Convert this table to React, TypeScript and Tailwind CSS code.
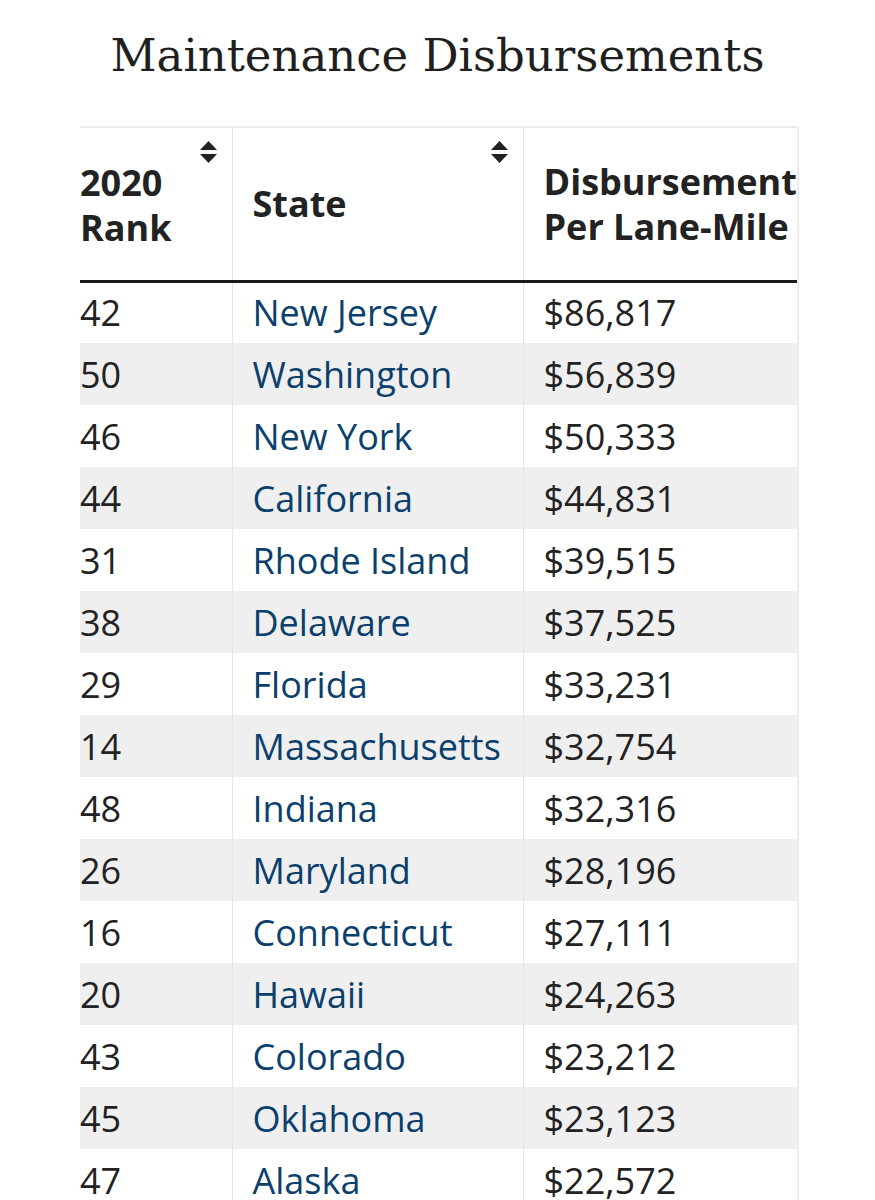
const rows: [string, string, string][] = [
  ["42", "New Jersey", "$86,817"],
  ["50", "Washington", "$56,839"],
  ["46", "New York", "$50,333"],
  ["44", "California", "$44,831"],
  ["31", "Rhode Island", "$39,515"],
  ["38", "Delaware", "$37,525"],
  ["29", "Florida", "$33,231"],
  ["14", "Massachusetts", "$32,754"],
  ["48", "Indiana", "$32,316"],
  ["26", "Maryland", "$28,196"],
  ["16", "Connecticut", "$27,111"],
  ["20", "Hawaii", "$24,263"],
  ["43", "Colorado", "$23,212"],
  ["45", "Oklahoma", "$23,123"],
  ["47", "Alaska", "$22,572"],
]

function SortIcon() {
  return (
    <svg width="17" height="22" viewBox="0 0 17 22" className="absolute top-[13px] right-[15px]">
      <path d="M8.5 0 L17 9 H0 Z" fill="#222" />
      <path d="M0 13 H17 L8.5 22 Z" fill="#222" />
    </svg>
  )
}

export default function App() {
  return (
    <div className="h-[1200px] bg-white overflow-hidden" style={{ fontFamily: '"Open Sans", sans-serif' }}>
      <h1
        className="text-center text-[45px] leading-none pt-[33px] pb-[48px] text-[#1f1f1f]"
        style={{ fontFamily: '"DejaVu Serif", serif' }}
      >
        Maintenance Disbursements
      </h1>

      <div className="ml-[80px] w-[719px] overflow-hidden border-t-2 border-r-2 border-[#ececec]">
        <table className="table-fixed border-collapse w-[760px] text-[36px] text-[#222]">
          <colgroup>
            <col className="w-[152px]" />
            <col className="w-[291px]" />
            <col className="w-[317px]" />
          </colgroup>
          <thead>
            <tr className="border-b-[3px] border-[#1a1a1a]">
              <th className="relative h-[153px] text-left align-middle font-bold leading-[45px] pl-0 pt-[3px] border-r border-[#e6e6e6]">
                <SortIcon />
                2020
                <br />
                Rank
              </th>
              <th className="relative text-left align-middle font-bold leading-[45px] pl-[20px] border-r border-[#e6e6e6]">
                <SortIcon />
                State
              </th>
              <th className="text-left align-middle font-bold leading-[45px] pl-[20px] whitespace-nowrap">
                Disbursement
                <br />
                Per Lane-Mile
              </th>
            </tr>
          </thead>
          <tbody>
            {rows.map(([rank, state, amount], i) => (
              <tr key={state} className={i % 2 === 1 ? "bg-[#efefef]" : "bg-white"}>
                <td className="h-[62px] align-middle leading-tight pl-0 border-r border-[#e6e6e6]">{rank}</td>
                <td className="align-middle leading-tight pl-[20px] text-[#0b3f6d] border-r border-[#e6e6e6]">{state}</td>
                <td className="align-middle leading-tight pl-[20px]">{amount}</td>
              </tr>
            ))}
          </tbody>
        </table>
      </div>
    </div>
  )
}
